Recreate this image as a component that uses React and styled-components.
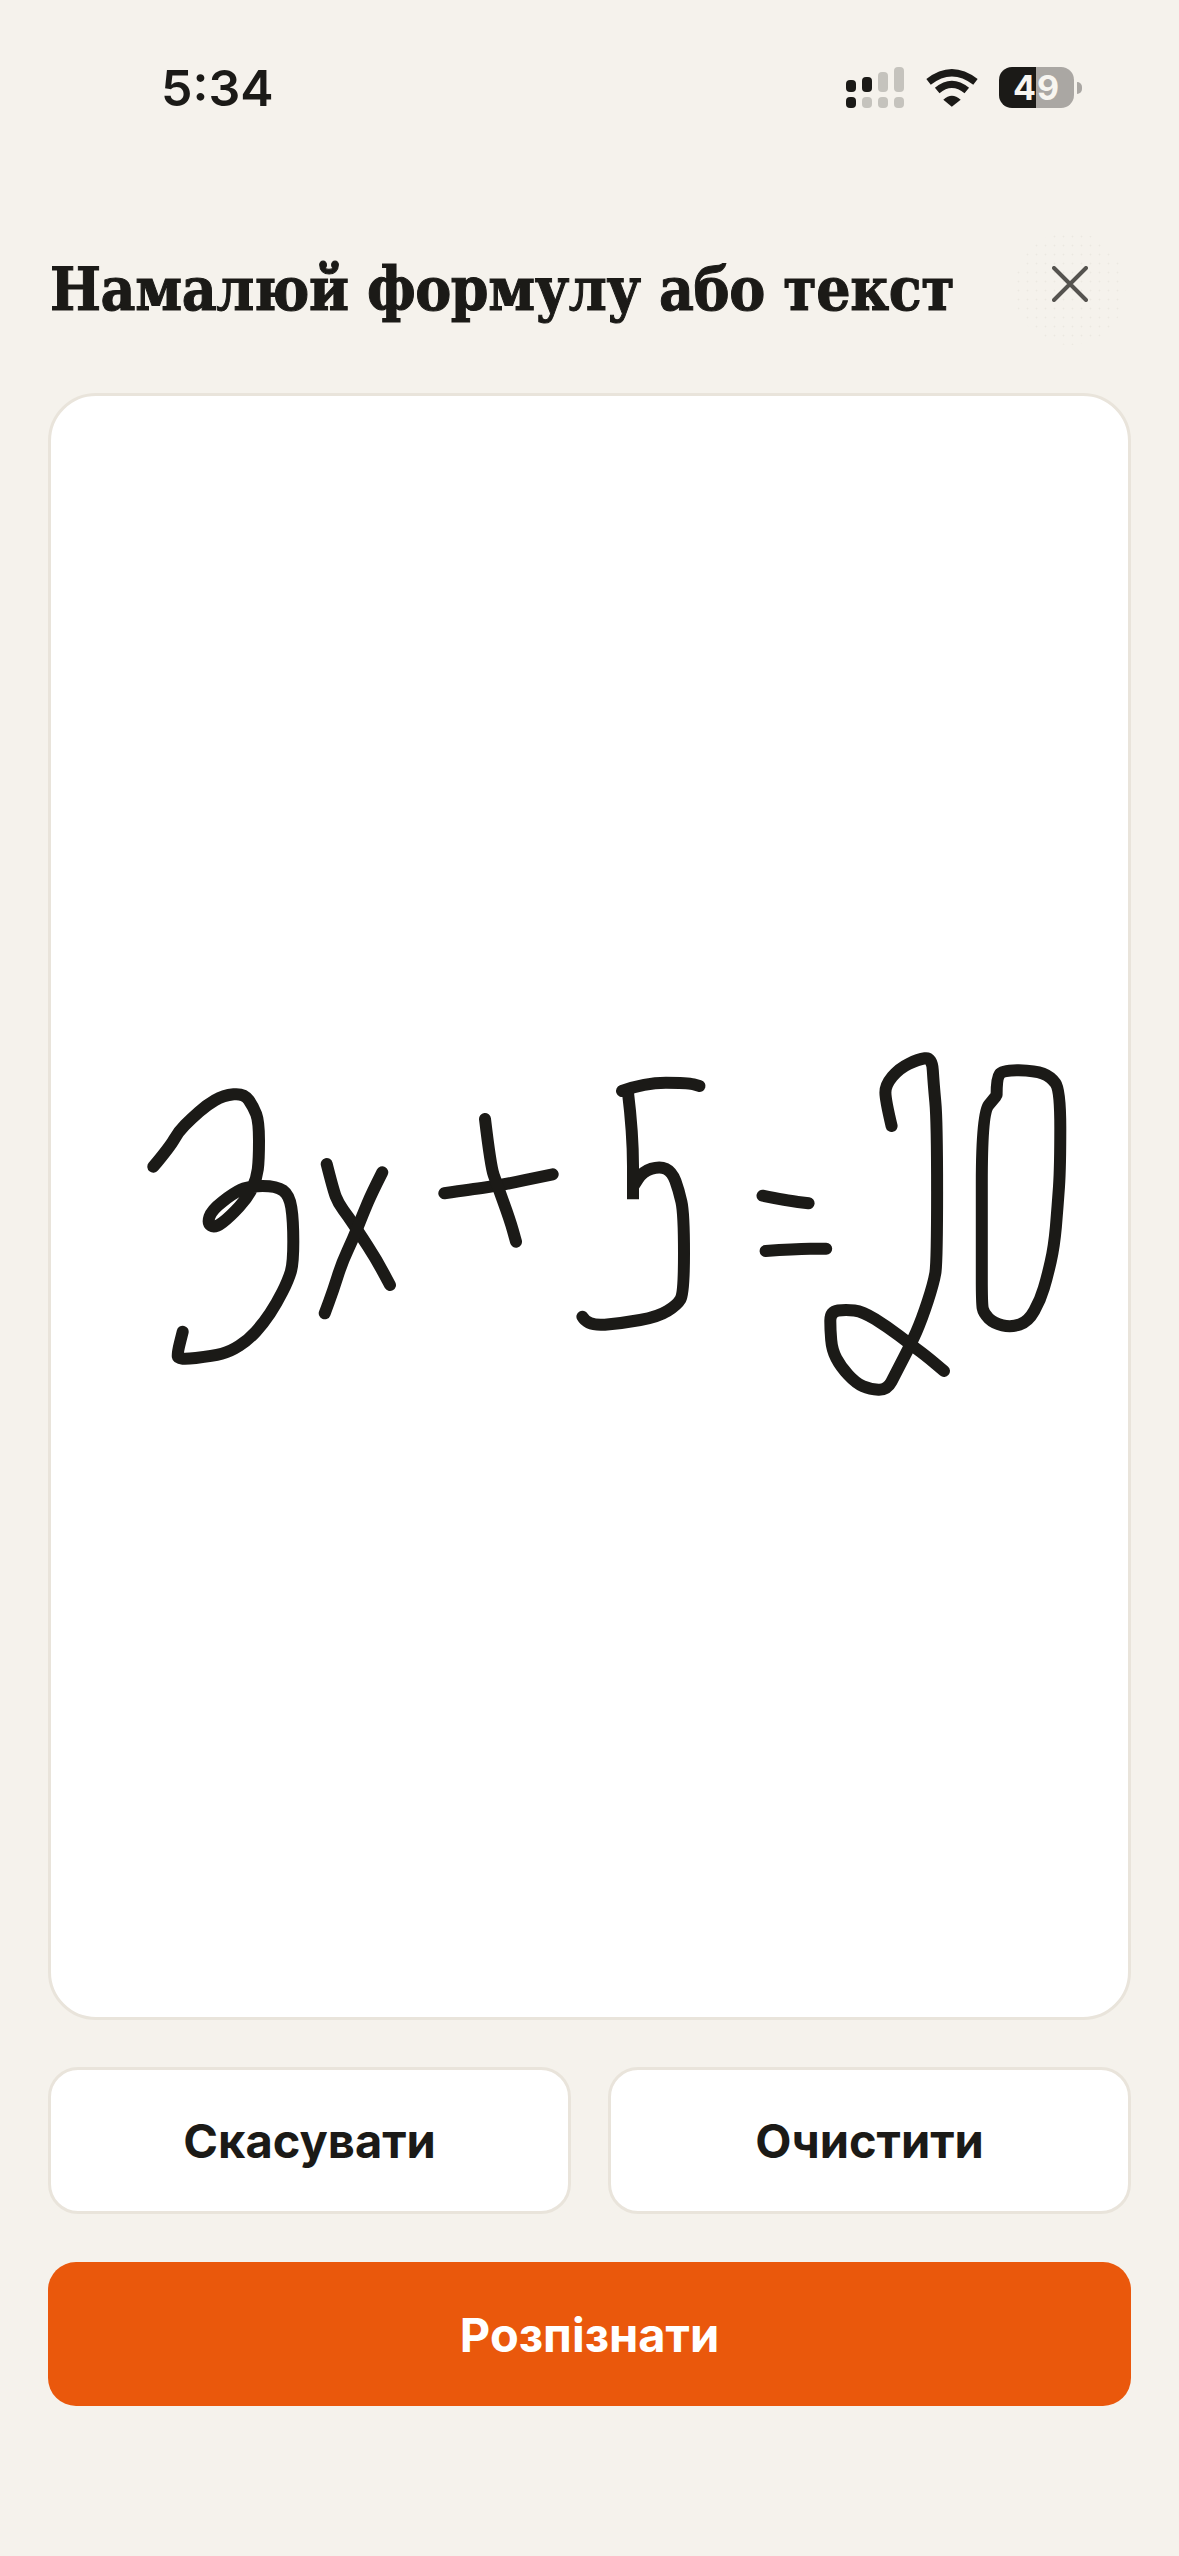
import React from "react";
import styled, { createGlobalStyle } from "styled-components";

const Global = createGlobalStyle`
  html, body { margin: 0; padding: 0; background: #f5f2ec; }
  * { box-sizing: border-box; }
`;

const Page = styled.div`
  width: 1179px;
  height: 2556px;
  padding: 0 48px;
  display: flex;
  flex-direction: column;
  background: #f5f2ec;
  color: #1b1a17;
  font-family: Inter, "Liberation Sans", sans-serif;
  overflow: hidden;
`;

const StatusBar = styled.div`
  height: 232px;
  padding: 60px 57px 0 113px;
  display: flex;
  justify-content: space-between;
  align-items: flex-start;
`;

const Time = styled.div`
  font-size: 50px;
  font-weight: 600;
  line-height: 56px;
`;

const StatusIcons = styled.div`
  display: flex;
  align-items: flex-start;
  padding-top: 7px;
`;

const Signal = styled.svg`
  width: 58px;
  height: 41px;
  margin-right: 22px;
`;

const Wifi = styled.svg`
  width: 52px;
  height: 38px;
  margin-top: 2px;
  margin-right: 21px;
`;

const Battery = styled.div`
  width: 75px;
  height: 41px;
  border-radius: 13px;
  background: linear-gradient(90deg, #1b1a17 0 37px, #aaa7a3 37px 100%);
  color: #f7f5f0;
  font-size: 34px;
  font-weight: 700;
  letter-spacing: 1px;
  line-height: 41px;
  text-align: center;
  position: relative;
  &::after {
    content: "";
    position: absolute;
    left: 78px;
    top: 15px;
    width: 5px;
    height: 12px;
    border-radius: 0 6px 6px 0;
    background: #aaa7a3;
  }
`;

const Header = styled.div`
  height: 161px;
  display: flex;
  justify-content: space-between;
  align-items: flex-start;
`;

const Title = styled.h1`
  margin: 21px 0 0 2px;
  font-family: "DejaVu Serif Condensed", "DejaVu Serif", serif;
  font-stretch: condensed;
  font-size: 60px;
  font-weight: 700;
  letter-spacing: -0.4px;
  line-height: 72px;
  white-space: nowrap;
  color: #1b1a17;
  -webkit-text-stroke: 1px #1b1a17;
`;

const CloseButton = styled.button`
  width: 112px;
  height: 113px;
  margin-right: 5px;
  padding: 0 0 10px;
  border: 0;
  border-radius: 50%;
  display: flex;
  align-items: center;
  justify-content: center;
  background-color: transparent;
  background-image: radial-gradient(circle, #ebe8e1 0.8px, transparent 1.1px);
  background-size: 9px 9px;
`;

const CloseIcon = styled.svg`
  width: 36px;
  height: 36px;
  display: block;
`;

const Canvas = styled.div`
  height: 1627px;
  background: #fff;
  border: 3px solid #e9e4db;
  border-radius: 48px;
  overflow: hidden;
`;

const Drawing = styled.svg`
  display: block;
  width: 100%;
  height: 100%;
`;

const Ink = styled.path`
  fill: none;
  stroke: #1b1a17;
  stroke-width: 12;
  stroke-linecap: ${(p) => (p.$butt ? "butt" : "round")};
  stroke-linejoin: round;
`;

const ButtonRow = styled.div`
  display: grid;
  grid-template-columns: 1fr 1fr;
  gap: 37px;
  margin-top: 47px;
`;

const SecondaryButton = styled.button`
  height: 147px;
  border: 3px solid #e9e4db;
  border-radius: 30px;
  background: #fff;
  color: #1b1a17;
  font-family: inherit;
  font-size: 47px;
  font-weight: 700;
  padding: 0;
`;

const PrimaryButton = styled.button`
  height: 144px;
  margin-top: 48px;
  border: 0;
  border-radius: 28px;
  background: #ea580c;
  color: #fff;
  font-family: inherit;
  font-size: 47px;
  font-weight: 700;
  padding: 0;
`;

// Zoom crop → page coordinates
const a = (pts) => pts.map(([x, y]) => [120 + x / 3, 1050 + y / 3]);
const b = (pts) => pts.map(([x, y]) => [560 + x / 2.904, 1040 + y / 3]);

const smooth = (pts) => {
  let d = `M${pts[0][0].toFixed(1)} ${pts[0][1].toFixed(1)}`;
  for (let i = 1; i < pts.length - 1; i++) {
    const mx = (pts[i][0] + pts[i + 1][0]) / 2;
    const my = (pts[i][1] + pts[i + 1][1]) / 2;
    d += ` Q${pts[i][0].toFixed(1)} ${pts[i][1].toFixed(1)} ${mx.toFixed(1)} ${my.toFixed(1)}`;
  }
  const l = pts[pts.length - 1];
  return d + ` L${l[0].toFixed(1)} ${l[1].toFixed(1)}`;
};

const strokes = [
  a([[100,350],[150,290],[175,245],[215,205],[260,165],[310,136],[372,130],[400,170],[417,215],[417,330],[410,385],[385,440],[330,500],[285,535],[262,520],[275,480],[340,430],[385,408],[470,408],[508,435],[520,510],[520,640],[505,690],[470,760],[430,820],[385,870],[330,905],[280,918],[175,930],[172,910],[188,845]]),
  a([[620,342],[640,420],[655,460],[685,500],[715,545],[770,630],[810,705]]),
  a([[787,367],[755,430],[730,490],[700,565],[665,640],[640,720],[614,790]]),
  a([[973,430],[1060,417],[1130,408],[1298,373]]),
  a([[1095,207],[1112,350],[1130,400],[1170,510],[1188,575]]),
  b([[180,153],[245,128],[370,128],[405,138]]),
  b([[588,467],[660,482],[722,490]]),
  b([[597,633],[680,627],[773,626]]),
  b([[963,258],[945,180],[945,135],[985,85],[1040,58],[1080,52],[1085,130],[1095,240],[1095,670],[1085,730],[1050,840],[1020,910],[975,1000],[950,1050],[900,1048],[860,1030],[815,980],[790,930],[785,870],[785,815],[830,808],[880,815],[950,860],[1020,915],[1060,945],[1115,993]]),
  b([[1268,165],[1268,115],[1285,90],[1380,92],[1425,110],[1453,150],[1453,380],[1445,500],[1435,620],[1415,710],[1395,780],[1360,845],[1310,862],[1260,850],[1230,820],[1225,790],[1225,640],[1225,220],[1265,170]]),
  b([[65,830],[80,858],[180,850],[285,830],[340,795],[360,760],[360,520],[345,450],[325,395],[290,378],[240,395],[212,440]]),
];
const fiveStem = b([[197,153],[212,280],[212,478]]);

const signalBars = [
  { x: 0, y: 13, h: 12, top: "#1b1a17", bottom: "#1b1a17" },
  { x: 16, y: 10, h: 15, top: "#1b1a17", bottom: "#c5c3bd" },
  { x: 32, y: 5, h: 20, top: "#c5c3bd", bottom: "#c5c3bd" },
  { x: 48, y: 0, h: 25, top: "#c5c3bd", bottom: "#c5c3bd" },
];

export default function App() {
  return (
    <Page>
      <Global />
      <StatusBar>
        <Time>5:34</Time>
        <StatusIcons>
          <Signal viewBox="0 0 58 41">
            {signalBars.map((s) => (
              <g key={s.x}>
                <rect x={s.x} y={s.y} width="10" height={s.h} rx="4" fill={s.top} />
                <rect x={s.x} y="30" width="10" height="11" rx="4" fill={s.bottom} />
              </g>
            ))}
          </Signal>
          <Wifi viewBox="0 0 51 37">
            <path d="M2.5 12.5Q25.3 -5.5 48.5 12.5" fill="none" stroke="#1b1a17" strokeWidth="7" />
            <path d="M11 21Q25.3 9 40 21" fill="none" stroke="#1b1a17" strokeWidth="7" />
            <path d="M17 30Q25.3 22 34 30L25.3 37Z" fill="#1b1a17" />
          </Wifi>
          <Battery>49</Battery>
        </StatusIcons>
      </StatusBar>
      <Header>
        <Title>Намалюй формулу або текст</Title>
        <CloseButton aria-label="Закрити">
          <CloseIcon viewBox="0 0 36 36">
            <path d="M2 2L34 34M34 2L2 34" stroke="#55534f" strokeWidth="4" strokeLinecap="round" />
          </CloseIcon>
        </CloseButton>
      </Header>
      <Canvas>
        <Drawing viewBox="51 396 1077 1621">
          {strokes.map((s, i) => (
            <Ink key={i} d={smooth(s)} />
          ))}
          <Ink $butt d={smooth(fiveStem)} />
        </Drawing>
      </Canvas>
      <ButtonRow>
        <SecondaryButton>Скасувати</SecondaryButton>
        <SecondaryButton>Очистити</SecondaryButton>
      </ButtonRow>
      <PrimaryButton>Розпізнати</PrimaryButton>
    </Page>
  );
}
